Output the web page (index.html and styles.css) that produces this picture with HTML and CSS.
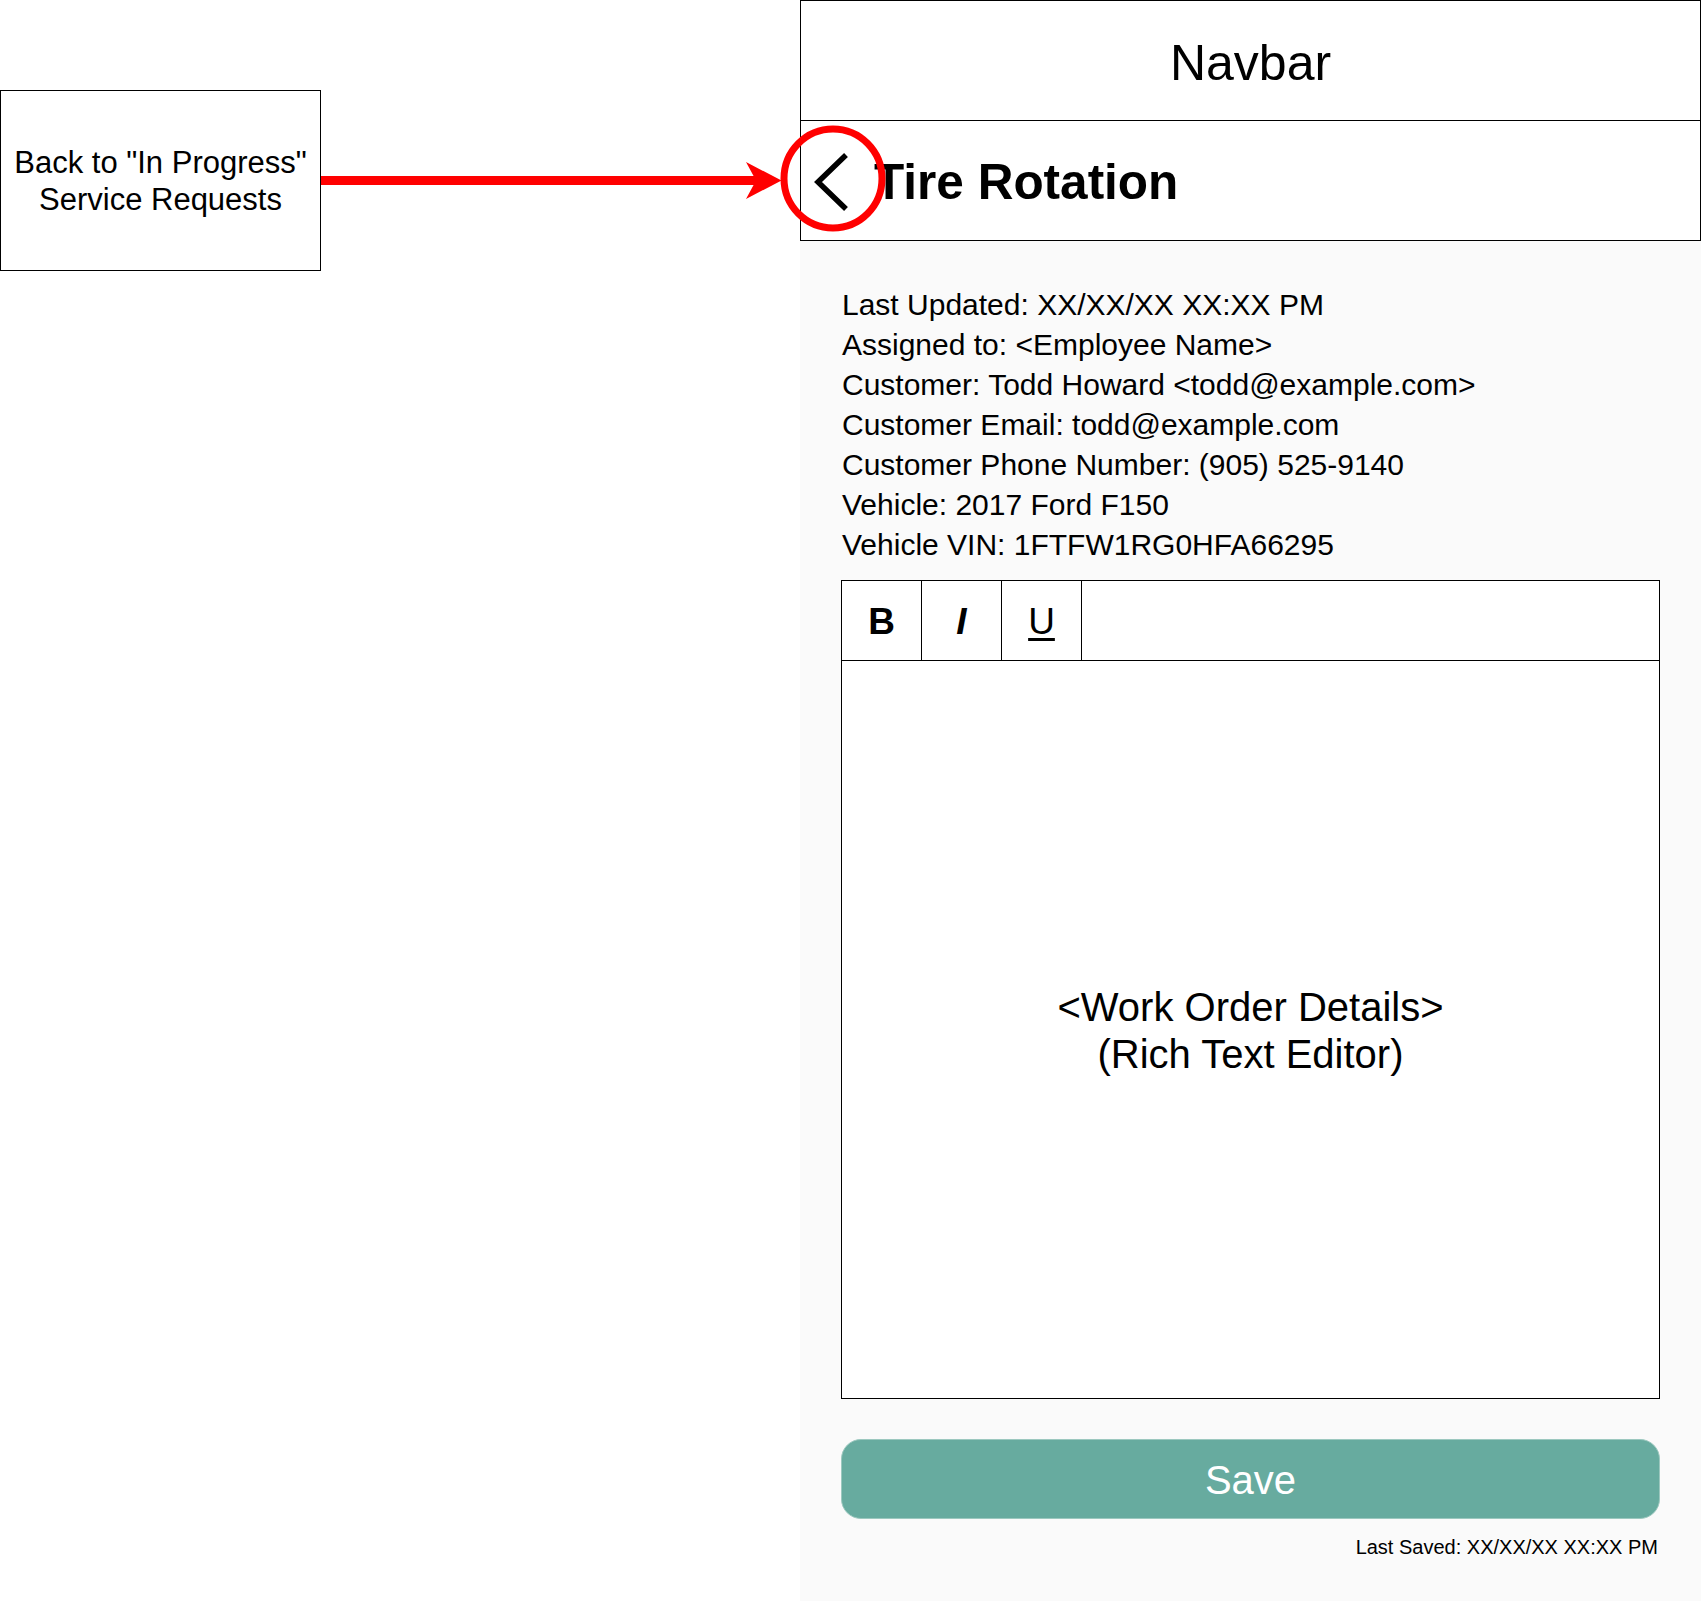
FILE: index.html
```html
<!DOCTYPE html>
<html lang="en">
<head>
<meta charset="utf-8">
<title>Tire Rotation – Work Order</title>
<link rel="stylesheet" href="styles.css">
</head>
<body>
<div class="canvas">
  <aside class="side">
    <div class="note">Back to "In Progress"<br>Service Requests</div>
  </aside>

  <main class="phone">
    <div class="navbar">Navbar</div>
    <header class="titlebar">
      <svg class="back" width="60" height="70" viewBox="0 0 60 70" aria-hidden="true">
        <polyline points="41,8 13,35 41,62" fill="none" stroke="#000" stroke-width="5.5" stroke-linejoin="miter" stroke-linecap="butt"/>
      </svg>
      <h1 class="title">Tire Rotation</h1>
    </header>

    <section class="content">
      <div class="info">
        <div>Last Updated: XX/XX/XX XX:XX PM</div>
        <div>Assigned to: &lt;Employee Name&gt;</div>
        <div>Customer: Todd Howard &lt;todd@example.com&gt;</div>
        <div>Customer Email: todd@example.com</div>
        <div>Customer Phone Number: (905) 525-9140</div>
        <div>Vehicle: 2017 Ford F150</div>
        <div>Vehicle VIN: 1FTFW1RG0HFA66295</div>
      </div>

      <div class="editor">
        <div class="toolbar">
          <span class="tool tool-b">B</span>
          <span class="tool tool-i">I</span>
          <span class="tool tool-u">U</span>
        </div>
        <div class="editor-body">&lt;Work Order Details&gt;<br>(Rich Text Editor)</div>
      </div>

      <button class="save" type="button">Save</button>
      <div class="last-saved">Last Saved: XX/XX/XX XX:XX PM</div>
    </section>
  </main>

  <svg class="overlay" width="1701" height="1601" viewBox="0 0 1701 1601" aria-hidden="true">
    <line x1="321" y1="180.5" x2="757" y2="180.5" stroke="#ff0000" stroke-width="9"/>
    <polygon points="746,162 781.5,180.5 746,199 756,180.5" fill="#ff0000"/>
    <ellipse cx="833" cy="178.5" rx="49" ry="49.5" fill="none" stroke="#ff0000" stroke-width="7"/>
  </svg>
</div>
</body>
</html>
```

FILE: styles.css
```css
* { box-sizing: border-box; }

html, body {
  margin: 0;
  padding: 0;
  background: #ffffff;
}

body {
  font-family: "Liberation Sans", Arial, Helvetica, sans-serif;
  color: #000;
}

.canvas {
  position: relative;
  display: flex;
  width: 1701px;
  height: 1601px;
  overflow: hidden;
}

.side {
  width: 800px;
  flex: none;
  padding-top: 90px;
}

.note {
  width: 321px;
  height: 181px;
  border: 1px solid #000;
  display: flex;
  align-items: center;
  justify-content: center;
  text-align: center;
  font-size: 31px;
  line-height: 37.5px;
  padding-top: 1px;
}

.phone {
  width: 901px;
  flex: none;
  background: #fafafa;
  display: flex;
  flex-direction: column;
}

.navbar {
  height: 121px;
  border: 1px solid #000;
  background: #fff;
  display: flex;
  align-items: center;
  justify-content: center;
  font-size: 50px;
  padding-top: 4px;
}

.titlebar {
  height: 120px;
  border: 1px solid #000;
  border-top: none;
  background: #fff;
  display: flex;
  align-items: center;
  padding-left: 4px;
  padding-top: 2px;
}

.back {
  display: block;
  flex: none;
}

.title {
  margin: 0 0 0 9px;
  font-size: 49.5px;
  font-weight: bold;
}

.content {
  padding: 44px 41px 0 41px;
  display: flex;
  flex-direction: column;
}

.info {
  font-size: 30px;
  line-height: 40px;
  padding-left: 1px;
}

.editor {
  margin-top: 15px;
  height: 819px;
  border: 1px solid #000;
  background: #fff;
  display: flex;
  flex-direction: column;
}

.toolbar {
  height: 80px;
  border-bottom: 1px solid #000;
  display: flex;
  flex: none;
}

.tool {
  width: 80px;
  border-right: 1px solid #000;
  display: flex;
  align-items: center;
  justify-content: center;
  font-size: 37px;
  padding-top: 2px;
}

.tool-b { font-weight: bold; }
.tool-i { font-style: italic; font-weight: bold; }
.tool-u { text-decoration: underline; text-underline-offset: 4px; text-decoration-thickness: 2.5px; }

.editor-body {
  flex: 1;
  display: flex;
  align-items: center;
  justify-content: center;
  text-align: center;
  font-size: 40px;
  line-height: 47px;
  padding-top: 2px;
}

.save {
  margin-top: 40px;
  height: 80px;
  border: 1px solid #9cc8bf;
  border-radius: 20px;
  background: #67ab9f;
  color: #fff;
  font-family: inherit;
  font-size: 40px;
  padding: 2px 0 0 0;
}

.last-saved {
  margin-top: 16px;
  text-align: right;
  font-size: 20px;
  line-height: 24px;
  padding-right: 2px;
}

.overlay {
  position: absolute;
  left: 0;
  top: 0;
  pointer-events: none;
}
```
